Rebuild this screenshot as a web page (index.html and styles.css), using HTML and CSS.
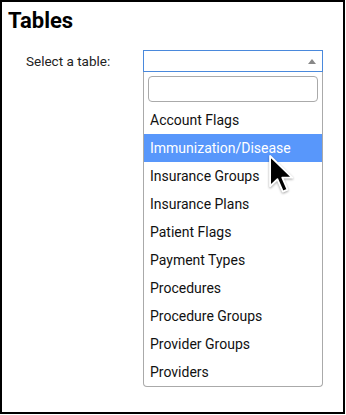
FILE: index.html
```html
<!DOCTYPE html>
<html lang="en">
<head>
    <meta charset="UTF-8">
    <meta name="viewport" content="width=device-width, initial-scale=1.0">
    <title>Tables</title>
    <link rel="stylesheet" href="styles.css">
</head>
<body>
    <div class="frame">
        <h1 class="title">Tables</h1>

        <div class="field">
            <label class="field-label" for="table-search">Select a table:</label>
            <div class="select">
                <div class="select-box"><span class="select-arrow"></span></div>
                <div class="dropdown">
                    <div class="search-wrap">
                        <input type="text" id="table-search" class="search">
                    </div>
                    <ul class="options">
                        <li>Account Flags</li>
                        <li class="active">Immunization/Disease</li>
                        <li>Insurance Groups</li>
                        <li>Insurance Plans</li>
                        <li>Patient Flags</li>
                        <li>Payment Types</li>
                        <li>Procedures</li>
                        <li>Procedure Groups</li>
                        <li>Provider Groups</li>
                        <li>Providers</li>
                    </ul>
                </div>
            </div>
        </div>

        <!-- mouse pointer over the highlighted option -->
        <svg class="cursor" width="27" height="43" viewBox="0 0 20 32">
            <path d="M1.5 1.5 L1.5 24 L7 18.8 L11 28 L14.5 26.5 L10.6 17.6 L18 17.6 Z"
                  fill="#000" stroke="#fff" stroke-width="1.4" stroke-linejoin="round"/>
        </svg>
    </div>
</body>
</html>
```

FILE: styles.css
```css
body {
    margin: 0;
    font-family: Roboto, "Liberation Sans", sans-serif;
    color: #111;
    background: #fff;
}

.frame {
    position: relative;
    width: 345px;
    height: 414px;
    box-sizing: border-box;
    border: 2px solid #000;
    padding: 7px 6px;
}

.title {
    margin: 0;
    font-size: 22px;
    line-height: 24px;
    font-weight: 700;
    color: #000;
}

/* label + select2 style dropdown */
.field {
    display: grid;
    grid-template-columns: 117px 180px;
    margin-top: 17px;
    padding-left: 18px;
}

.field-label {
    font-size: 13.5px;
    line-height: 22px;
    color: #222;
}

.select-box {
    position: relative;
    height: 22px;
    box-sizing: border-box;
    border: 1px solid #4a89dc;
}

.select-arrow {
    position: absolute;
    right: 6px;
    top: 8px;
    width: 0;
    height: 0;
    border-left: 4px solid transparent;
    border-right: 4px solid transparent;
    border-bottom: 5px solid #888;
}

.dropdown {
    border: 1px solid #aaa;
    border-top: none;
    border-radius: 0 0 4px 4px;
}

.search-wrap {
    padding: 4px;
}

.search {
    display: block;
    width: 100%;
    height: 26px;
    box-sizing: border-box;
    border: 1px solid #aaa;
    border-radius: 4px;
    margin: 0;
    outline: none;
}

.options {
    list-style: none;
    margin: 0;
    padding: 0;
}

.options li {
    height: 28px;
    line-height: 28px;
    padding-left: 6px;
    font-size: 14px;
    color: #111;
}

.options li.active {
    background-color: #5897fb;
    color: #fff;
}

.cursor {
    position: absolute;
    left: 266px;
    top: 152px;
    filter: drop-shadow(0 1px 1px rgba(0, 0, 0, 0.35));
}
```
